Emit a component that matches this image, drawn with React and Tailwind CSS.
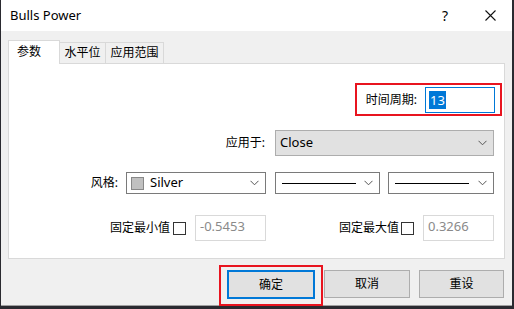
import React from 'react';

const font = { fontFamily: '"Noto Sans", "Noto Sans CJK SC", sans-serif' };

const Chevron = () => (
    <svg width="9" height="6" viewBox="0 0 9 6" className="shrink-0">
        <path d="M0.5 0.8 L4.5 4.8 L8.5 0.8" fill="none" stroke="#555" strokeWidth="1" />
    </svg>
);

const Checkbox = () => <div className="w-[13px] h-[13px] border border-[#333] bg-white shrink-0"></div>;

const App = () => {
    return (
        <div className="w-[514px] h-[309px] bg-[#2a2a30] flex flex-col text-[12px] text-black" style={font}>
            <div className="flex-1 flex flex-col bg-[#f0f0f0] ml-[1px] mr-[2px] border-b border-[#a0a0a0]">
                {/* Title bar */}
                <div className="h-[31px] bg-white flex items-center pl-[9px] pr-[16px]">
                    <span className="text-[13px] flex-1 leading-none">Bulls Power</span>
                    <span className="text-[14px] mr-[37px] leading-none">?</span>
                    <svg width="11" height="11" viewBox="0 0 11 11">
                        <path d="M0.5 0.5 L10.5 10.5 M10.5 0.5 L0.5 10.5" stroke="#111" strokeWidth="1.1" />
                    </svg>
                </div>

                <div className="px-[7px] pt-[9px]">
                    {/* Tabs */}
                    <div className="flex items-end h-[24px] -mb-px relative z-10">
                        <div className="w-[52px] h-[24px] bg-white border border-b-0 border-[#d9d9d9] flex items-center pl-[8px] pb-[2px]">参数</div>
                        <div className="w-[46px] h-[22px] bg-[#f0f0f0] border border-l-0 border-[#d9d9d9] flex items-center justify-center">水平位</div>
                        <div className="w-[58px] h-[22px] bg-[#f0f0f0] border border-l-0 border-[#d9d9d9] flex items-center justify-center">应用范围</div>
                    </div>

                    {/* Panel */}
                    <div className="h-[196px] bg-white border border-[#d9d9d9] pr-[9px] pt-[23px] flex flex-col">
                        <div className="flex justify-end">
                            <div className="relative flex items-center">
                                <span className="mr-[8px]">时间周期:</span>
                                <div className="w-[70px] h-[26px] border border-[#0078d7] flex items-center pl-[3px]">
                                    <span className="bg-[#0078d7] text-white px-[1px] leading-[18px] text-[13px]">13</span>
                                </div>
                                <div className="absolute -left-[11px] -right-[7px] -top-[4px] -bottom-[3px] border-2 border-[#e8141f]"></div>
                            </div>
                        </div>

                        <div className="flex mt-[17px] gap-[9px] items-center">
                            <div className="w-[257px] flex justify-end pr-[1px]">应用于:</div>
                            <div className="w-[219px] h-[26px] bg-[#e1e1e1] border border-[#adadad] flex items-center pl-[4px] pr-[6px]">
                                <span className="flex-1 text-[13px]">Close</span>
                                <Chevron />
                            </div>
                        </div>

                        <div className="flex mt-[16px] gap-[9px] items-center">
                            <div className="w-[257px] flex justify-end items-center">
                                <span className="mr-[8px]">风格:</span>
                                <div className="w-[140px] h-[22px] border border-[#7a7a7a] bg-white flex items-center pl-[4px] pr-[6px]">
                                    <div className="w-[13px] h-[13px] bg-[#c0c0c0] border border-[#888] mr-[6px]"></div>
                                    <span className="flex-1 text-[13px]">Silver</span>
                                    <Chevron />
                                </div>
                            </div>
                            <div className="w-[219px] flex gap-[8px]">
                                <div className="w-[105px] h-[22px] border border-[#7a7a7a] bg-white flex items-center pl-[6px] pr-[6px]">
                                    <div className="w-[74px] h-px bg-black mr-auto"></div>
                                    <Chevron />
                                </div>
                                <div className="w-[106px] h-[22px] border border-[#7a7a7a] bg-white flex items-center pl-[6px] pr-[6px]">
                                    <div className="w-[74px] h-px bg-black mr-auto"></div>
                                    <Chevron />
                                </div>
                            </div>
                        </div>

                        <div className="flex mt-[21px] gap-[9px] items-center">
                            <div className="w-[257px] flex justify-end items-center">
                                <span className="mr-[3px]">固定最小值</span>
                                <Checkbox />
                                <div className="w-[71px] h-[26px] ml-[9px] border border-[#d9d9d9] flex items-center pl-[4px] pb-[3px] text-[#8a8a8a] text-[13px]">-0.5453</div>
                            </div>
                            <div className="w-[219px] flex justify-end items-center">
                                <span className="mr-[2px]">固定最大值</span>
                                <Checkbox />
                                <div className="w-[71px] h-[26px] ml-[9px] border border-[#d9d9d9] flex items-center pl-[4px] pb-[3px] text-[#8a8a8a] text-[13px]">0.3266</div>
                            </div>
                        </div>
                    </div>

                    {/* Buttons */}
                    <div className="flex justify-end mt-[11px] gap-[9px] pr-[1px]">
                        <div className="relative">
                            <div className="w-[88px] h-[29px] bg-[#e1e1e1] border-2 border-[#0078d7] flex items-center justify-center">确定</div>
                            <div className="absolute -left-[8px] -right-[8px] -top-[5px] -bottom-[7px] border-2 border-[#e8141f]"></div>
                        </div>
                        <div className="w-[86px] h-[28px] bg-[#e1e1e1] border border-[#adadad] flex items-center justify-center">取消</div>
                        <div className="w-[85px] h-[28px] bg-[#e1e1e1] border border-[#adadad] flex items-center justify-center">重设</div>
                    </div>
                </div>
            </div>
            <div className="h-[3px]"></div>
        </div>
    );
};

export default App;
